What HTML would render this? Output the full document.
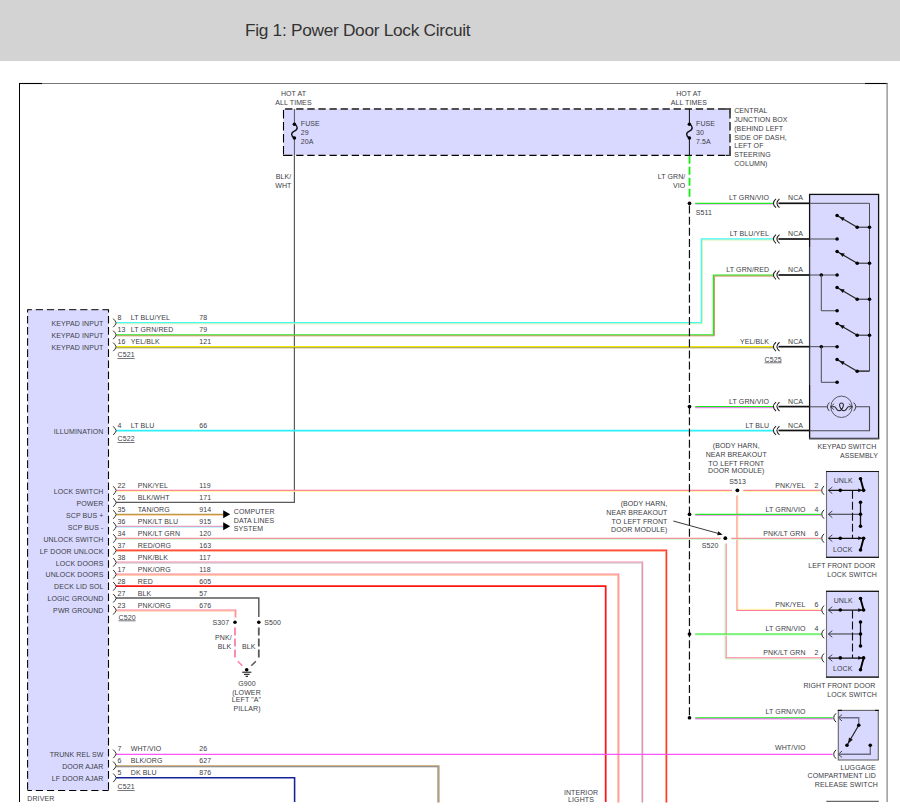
<!DOCTYPE html>
<html lang="en">
<head>
<meta charset="utf-8">
<title>Fig 1: Power Door Lock Circuit</title>
<style>
html,body{margin:0;padding:0;background:#fff}
body{width:900px;height:809px;overflow:hidden;position:relative;font-family:"Liberation Sans",Arial,sans-serif}
.hdr{position:absolute;left:0;top:0;width:900px;height:61px;background:#d3d3d3}
.hdr h1{position:absolute;left:245px;top:0;margin:0;font-weight:400;font-size:17.3px;line-height:61px;color:#333;white-space:nowrap;letter-spacing:-0.3px}
svg{position:absolute;left:0;top:0;display:block}
svg text{font-family:"Liberation Sans",Arial,sans-serif;font-size:7px;letter-spacing:0.1px;fill:#3d3d45}
</style>
</head>
<body>
<div class="hdr"><h1>Fig 1: Power Door Lock Circuit</h1></div>
<svg width="900" height="809" viewBox="0 0 900 809">
<line x1="19.5" y1="83" x2="19.5" y2="802" stroke="#000" stroke-width="1" />
<line x1="19" y1="83.5" x2="888" y2="83.5" stroke="#777" stroke-width="1" />
<line x1="19" y1="83.5" x2="42" y2="83.5" stroke="#000" stroke-width="1.1" />
<line x1="865" y1="83.5" x2="887.6" y2="83.5" stroke="#000" stroke-width="1.1" />
<line x1="887.1" y1="83" x2="887.1" y2="802" stroke="#8a8a8a" stroke-width="1.3" />
<rect x="283.3" y="108.9" width="446.7" height="46.3" fill="#d9d9ff"/>
<line x1="283.3" y1="109" x2="730" y2="109" stroke="#505050" stroke-width="1.8" stroke-dasharray="7.3 3.8" stroke-dashoffset="9.3"/>
<line x1="283.3" y1="155.4" x2="730" y2="155.4" stroke="#000" stroke-width="1.1" stroke-dasharray="7.3 3.8" stroke-dashoffset="9.3"/>
<line x1="283" y1="155.4" x2="285.4" y2="155.4" stroke="#000" stroke-width="1.1" />
<line x1="723.5" y1="109" x2="730.9" y2="109" stroke="#505050" stroke-width="1.8" />
<line x1="730" y1="108.2" x2="730" y2="113.5" stroke="#4a4a4a" stroke-width="1.8" />
<line x1="726" y1="155.4" x2="730.9" y2="155.4" stroke="#222" stroke-width="1.2" />
<line x1="730" y1="151" x2="730" y2="156" stroke="#4a4a4a" stroke-width="1.8" />
<line x1="283.5" y1="108.9" x2="283.5" y2="155.9" stroke="#000" stroke-width="1.1" stroke-dasharray="8.6 3.4" stroke-dashoffset="10.9"/>
<line x1="730" y1="108.9" x2="730" y2="155.9" stroke="#4a4a4a" stroke-width="1.8" stroke-dasharray="8.6 3.4" stroke-dashoffset="10.9"/>
<line x1="294.4" y1="108.9" x2="294.4" y2="124" stroke="#555" stroke-width="1" />
<line x1="294.4" y1="138" x2="294.4" y2="155.2" stroke="#555" stroke-width="1" />
<path d="M294.4,124 C298.09999999999997,126 298.09999999999997,129.6 294.4,131.1 C290.7,132.6 290.7,136 294.4,138" fill="none" stroke="#111" stroke-width="1.4"/>
<circle cx="294.4" cy="124.2" r="1.8" fill="#000"/>
<circle cx="294.4" cy="138" r="1.8" fill="#000"/>
<line x1="689.4" y1="108.9" x2="689.4" y2="124" stroke="#111" stroke-width="1" />
<line x1="689.4" y1="138" x2="689.4" y2="155.2" stroke="#111" stroke-width="1" />
<path d="M689.4,124 C693.1,126 693.1,129.6 689.4,131.1 C685.6999999999999,132.6 685.6999999999999,136 689.4,138" fill="none" stroke="#111" stroke-width="1.4"/>
<circle cx="689.4" cy="124.2" r="1.8" fill="#000"/>
<circle cx="689.4" cy="138" r="1.8" fill="#000"/>
<text x="293.5" y="95.9" text-anchor="middle">HOT AT</text>
<text x="293.5" y="104.8" text-anchor="middle">ALL TIMES</text>
<text x="688.8" y="95.9" text-anchor="middle">HOT AT</text>
<text x="688.8" y="104.8" text-anchor="middle">ALL TIMES</text>
<text x="300.8" y="125.5">FUSE</text>
<text x="300.8" y="134.5">29</text>
<text x="300.8" y="143.5">20A</text>
<text x="696" y="125.5">FUSE</text>
<text x="696" y="134.5">30</text>
<text x="696" y="143.5">7.5A</text>
<text x="734.2" y="112.7">CENTRAL</text>
<text x="734.2" y="121.8">JUNCTION BOX</text>
<text x="734.2" y="130.9">(BEHIND LEFT</text>
<text x="734.2" y="139.9">SIDE OF DASH,</text>
<text x="734.2" y="147.8">LEFT OF</text>
<text x="734.2" y="156.8">STEERING</text>
<text x="734.2" y="165.6">COLUMN)</text>
<text x="291.3" y="178.7" text-anchor="end">BLK/</text>
<text x="291.5" y="187.8" text-anchor="end">WHT</text>
<text x="685.4" y="178.5" text-anchor="end">LT GRN/</text>
<text x="685.4" y="187.6" text-anchor="end">VIO</text>
<rect x="27.6" y="309.6" width="81" height="480.8" fill="#d9d9ff"/>
<line x1="27.5" y1="309.6" x2="108.6" y2="309.6" stroke="#333" stroke-width="1.1" stroke-dasharray="7.2 3.9" stroke-dashoffset="2.8"/>
<line x1="27.5" y1="790.4" x2="108.6" y2="790.4" stroke="#000" stroke-width="1.05" stroke-dasharray="7.2 3.9" stroke-dashoffset="2.8"/>
<line x1="27.6" y1="309.5" x2="27.6" y2="790.4" stroke="#000" stroke-width="1.05" stroke-dasharray="7.6 3.5" stroke-dashoffset="4.6"/>
<line x1="108.5" y1="309.5" x2="108.5" y2="790.4" stroke="#000" stroke-width="1.1" stroke-dasharray="7.6 3.5" stroke-dashoffset="4.6"/>
<text x="27.3" y="800.8">DRIVER</text>
<polyline points="294.4,155.2 294.4,502.3 116,502.3" fill="none" stroke="#5a5a5a" stroke-width="1.2" />
<polyline points="116.2,322.8 701.4,322.8 701.4,239.05 773.4,239.05" fill="none" stroke="#48f6f6" stroke-width="1.45" />
<polyline points="116.2,323.85 702.45,323.85 702.45,240.1 773.4,240.1" fill="none" stroke="#d8f4a8" stroke-width="0.9" />
<polyline points="116.2,334.77 713.4,334.77 713.4,275.05 773.4,275.05" fill="none" stroke="#22e822" stroke-width="1.25" />
<polyline points="116.2,335.82 714.45,335.82 714.45,276.1 773.4,276.1" fill="none" stroke="#c88a50" stroke-width="0.9" />
<polyline points="116.2,346.74 773.4,346.74" fill="none" stroke="#f5e800" stroke-width="1.25" />
<polyline points="116.2,347.79 773.4,347.79" fill="none" stroke="#8a8420" stroke-width="0.9" />
<polyline points="116.0,430.58 773.2,430.58" fill="none" stroke="#2ef0f8" stroke-width="1.7" />
<polyline points="116.2,490.38 732.2,490.38" fill="none" stroke="#ff7f9a" stroke-width="1.25" />
<polyline points="116.2,491.43 732.2,491.43" fill="none" stroke="#fff79a" stroke-width="0.9" />
<polyline points="743.2,490.38 821.0,490.38" fill="none" stroke="#ff7f9a" stroke-width="1.25" />
<polyline points="743.2,491.43 821.0,491.43" fill="none" stroke="#fff79a" stroke-width="0.9" />
<polyline points="821.0,610.33 737.05,610.33 737.05,495.6" fill="none" stroke="#ff7f9a" stroke-width="1.25" />
<polyline points="821.0,609.28 738.1,609.28 738.1,495.6" fill="none" stroke="#fff79a" stroke-width="0.9" />
<polyline points="116.2,514.32 223.7,514.32" fill="none" stroke="#b4923f" stroke-width="1.25" />
<polyline points="116.2,515.37 223.7,515.37" fill="none" stroke="#ffc890" stroke-width="0.9" />
<polyline points="116.2,526.29 223.7,526.29" fill="none" stroke="#ec92b4" stroke-width="1.25" />
<polyline points="116.2,527.34 223.7,527.34" fill="none" stroke="#a8f4ff" stroke-width="0.9" />
<polygon points="223.2,510.27 230.2,514.27 223.2,518.27" fill="#000"/>
<polygon points="223.2,522.24 230.2,526.24 223.2,530.24" fill="#000"/>
<text x="233.75" y="514">COMPUTER</text>
<text x="233.75" y="523">DATA LINES</text>
<text x="233.75" y="531">SYSTEM</text>
<polyline points="116.2,538.26 720.7,538.26" fill="none" stroke="#ff7f9a" stroke-width="1.25" />
<polyline points="116.2,539.31 720.7,539.31" fill="none" stroke="#bdf8bd" stroke-width="0.9" />
<polyline points="731.2,538.26 821.0,538.26" fill="none" stroke="#ff7f9a" stroke-width="1.25" />
<polyline points="731.2,539.31 821.0,539.31" fill="none" stroke="#bdf8bd" stroke-width="0.9" />
<polyline points="726.05,543.6 726.05,657.96 821.0,657.96" fill="none" stroke="#ff7f9a" stroke-width="1.25" />
<polyline points="725.0,543.6 725.0,659.01 821.0,659.01" fill="none" stroke="#bdf8bd" stroke-width="0.9" />
<polyline points="116.2,550.23 666.55,550.23 666.55,802.6" fill="none" stroke="#ff3830" stroke-width="1.4" />
<polyline points="116.2,551.28 665.5,551.28 665.5,802.6" fill="none" stroke="#ffa078" stroke-width="0.9" />
<polyline points="116.2,562.2 642.55,562.2 642.55,802.6" fill="none" stroke="#ee90b0" stroke-width="1.25" />
<polyline points="116.2,563.25 641.5,563.25 641.5,802.6" fill="none" stroke="#d0d0d4" stroke-width="0.9" />
<polyline points="116.2,574.17 618.75,574.17 618.75,802.6" fill="none" stroke="#ff8a98" stroke-width="1.25" />
<polyline points="116.2,575.22 617.7,575.22 617.7,802.6" fill="none" stroke="#ffb488" stroke-width="0.9" />
<polyline points="116.0,586.19 605.7,586.19 605.7,802.0" fill="none" stroke="#ff1414" stroke-width="1.75" />
<polyline points="116,598.06 258.8,598.06 258.8,617" fill="none" stroke="#5a5a5a" stroke-width="1.5" />
<polyline points="116.2,610.08 235.75,610.08 235.75,617.6" fill="none" stroke="#ff7f9a" stroke-width="1.25" />
<polyline points="116.2,611.13 234.7,611.13 234.7,617.6" fill="none" stroke="#ffc898" stroke-width="0.9" />
<line x1="258.8" y1="627.5" x2="258.8" y2="659" stroke="#5a5a5a" stroke-width="1.8" stroke-dasharray="8 3"/>
<line x1="235" y1="627.5" x2="235" y2="659" stroke="#ff80a8" stroke-width="1.8" stroke-dasharray="8 3"/>
<line x1="255.8" y1="661.3" x2="251.3" y2="665.8" stroke="#5a5a5a" stroke-width="1.5" />
<line x1="237.8" y1="661.3" x2="242.3" y2="665.8" stroke="#ff80a8" stroke-width="1.5" />
<circle cx="258.8" cy="622.2" r="1.8" fill="#000"/>
<circle cx="235" cy="622.2" r="1.8" fill="#000"/>
<circle cx="246.7" cy="669.7" r="1.8" fill="#000"/>
<line x1="242.2" y1="672.2" x2="251.4" y2="672.2" stroke="#000" stroke-width="1" />
<line x1="244" y1="674.3" x2="249.6" y2="674.3" stroke="#000" stroke-width="1" />
<line x1="245.6" y1="676.3" x2="248" y2="676.3" stroke="#000" stroke-width="1" />
<text x="229.3" y="624.8" text-anchor="end">S307</text>
<text x="264.3" y="624.8">S500</text>
<text x="231.8" y="639.8" text-anchor="end">PNK/</text>
<text x="231.3" y="649" text-anchor="end">BLK</text>
<text x="242" y="649">BLK</text>
<text x="246.9" y="685.7" text-anchor="middle">G900</text>
<text x="246.5" y="694.5" text-anchor="middle">(LOWER</text>
<text x="246.5" y="702" text-anchor="middle">LEFT "A"</text>
<text x="247" y="710.7" text-anchor="middle">PILLAR)</text>
<polyline points="116.0,754.37 832.6,754.37" fill="none" stroke="#fb55fb" stroke-width="1.4" />
<polyline points="116.2,765.69 439.05,765.69 439.05,802.6" fill="none" stroke="#c49c60" stroke-width="1.1" />
<polyline points="116.2,766.74 438.0,766.74 438.0,802.6" fill="none" stroke="#7a7a7a" stroke-width="1.1" />
<polyline points="116.0,777.71 294.6,777.71 294.6,802.0" fill="none" stroke="#14229a" stroke-width="1.55" />
<text x="581" y="794.7" text-anchor="middle">INTERIOR</text>
<text x="581" y="801.7" text-anchor="middle">LIGHTS</text>
<text x="103.5" y="325.95" text-anchor="end">KEYPAD INPUT</text>
<text x="117.5" y="320.25">8</text>
<text x="130.75" y="320.25">LT BLU/YEL</text>
<text x="199.3" y="320.25">78</text>
<path d="M113.2,318.65 Q115.4,320.75 116.2,322.95 Q115.4,325.15 113.2,327.25" fill="none" stroke="#333" stroke-width="1"/>
<text x="103.5" y="337.92" text-anchor="end">KEYPAD INPUT</text>
<text x="117.5" y="332.22">13</text>
<text x="130.75" y="332.22">LT GRN/RED</text>
<text x="199.3" y="332.22">79</text>
<path d="M113.2,330.62 Q115.4,332.72 116.2,334.92 Q115.4,337.12 113.2,339.22" fill="none" stroke="#333" stroke-width="1"/>
<text x="103.5" y="349.89" text-anchor="end">KEYPAD INPUT</text>
<text x="117.5" y="344.19">16</text>
<text x="130.75" y="344.19">YEL/BLK</text>
<text x="199.3" y="344.19">121</text>
<path d="M113.2,342.59 Q115.4,344.69 116.2,346.89 Q115.4,349.09 113.2,351.19" fill="none" stroke="#333" stroke-width="1"/>
<text x="103.5" y="433.68" text-anchor="end">ILLUMINATION</text>
<text x="117.5" y="427.98">4</text>
<text x="130.75" y="427.98">LT BLU</text>
<text x="199.3" y="427.98">66</text>
<path d="M113.2,426.38 Q115.4,428.48 116.2,430.68 Q115.4,432.88 113.2,434.98" fill="none" stroke="#333" stroke-width="1"/>
<text x="103.5" y="493.53" text-anchor="end">LOCK SWITCH</text>
<text x="117.5" y="487.83">22</text>
<text x="137.75" y="487.83">PNK/YEL</text>
<text x="199.3" y="487.83">119</text>
<path d="M113.2,486.23 Q115.4,488.33 116.2,490.53 Q115.4,492.73 113.2,494.83" fill="none" stroke="#333" stroke-width="1"/>
<text x="103.5" y="505.5" text-anchor="end">POWER</text>
<text x="117.5" y="499.8">26</text>
<text x="137.75" y="499.8">BLK/WHT</text>
<text x="199.3" y="499.8">171</text>
<path d="M113.2,498.2 Q115.4,500.3 116.2,502.5 Q115.4,504.7 113.2,506.8" fill="none" stroke="#333" stroke-width="1"/>
<text x="103.5" y="518.22" text-anchor="end">SCP BUS +</text>
<text x="117.5" y="511.77">35</text>
<text x="137.75" y="511.77">TAN/ORG</text>
<text x="199.3" y="511.77">914</text>
<path d="M113.2,510.17 Q115.4,512.27 116.2,514.47 Q115.4,516.67 113.2,518.77" fill="none" stroke="#333" stroke-width="1"/>
<text x="103.5" y="529.64" text-anchor="end">SCP BUS -</text>
<text x="117.5" y="523.74">36</text>
<text x="137.75" y="523.74">PNK/LT BLU</text>
<text x="199.3" y="523.74">915</text>
<path d="M113.2,522.14 Q115.4,524.24 116.2,526.44 Q115.4,528.64 113.2,530.74" fill="none" stroke="#333" stroke-width="1"/>
<text x="103.5" y="542.41" text-anchor="end">UNLOCK SWITCH</text>
<text x="117.5" y="535.71">34</text>
<text x="137.75" y="535.71">PNK/LT GRN</text>
<text x="199.3" y="535.71">120</text>
<path d="M113.2,534.11 Q115.4,536.21 116.2,538.41 Q115.4,540.61 113.2,542.71" fill="none" stroke="#333" stroke-width="1"/>
<text x="103.5" y="554.13" text-anchor="end">LF DOOR UNLOCK</text>
<text x="117.5" y="547.68">37</text>
<text x="137.75" y="547.68">RED/ORG</text>
<text x="199.3" y="547.68">163</text>
<path d="M113.2,546.08 Q115.4,548.18 116.2,550.38 Q115.4,552.58 113.2,554.68" fill="none" stroke="#333" stroke-width="1"/>
<text x="103.5" y="566.35" text-anchor="end">LOCK DOORS</text>
<text x="117.5" y="559.65">38</text>
<text x="137.75" y="559.65">PNK/BLK</text>
<text x="199.3" y="559.65">117</text>
<path d="M113.2,558.05 Q115.4,560.15 116.2,562.35 Q115.4,564.55 113.2,566.65" fill="none" stroke="#333" stroke-width="1"/>
<text x="103.5" y="577.32" text-anchor="end">UNLOCK DOORS</text>
<text x="117.5" y="571.62">17</text>
<text x="137.75" y="571.62">PNK/ORG</text>
<text x="199.3" y="571.62">118</text>
<path d="M113.2,570.02 Q115.4,572.12 116.2,574.32 Q115.4,576.52 113.2,578.62" fill="none" stroke="#333" stroke-width="1"/>
<text x="103.5" y="589.29" text-anchor="end">DECK LID SOL</text>
<text x="117.5" y="583.59">28</text>
<text x="137.75" y="583.59">RED</text>
<text x="199.3" y="583.59">605</text>
<path d="M113.2,581.99 Q115.4,584.09 116.2,586.29 Q115.4,588.49 113.2,590.59" fill="none" stroke="#333" stroke-width="1"/>
<text x="103.5" y="601.26" text-anchor="end">LOGIC GROUND</text>
<text x="117.5" y="595.56">27</text>
<text x="137.75" y="595.56">BLK</text>
<text x="199.3" y="595.56">57</text>
<path d="M113.2,593.96 Q115.4,596.06 116.2,598.26 Q115.4,600.46 113.2,602.56" fill="none" stroke="#333" stroke-width="1"/>
<text x="103.5" y="613.23" text-anchor="end">PWR GROUND</text>
<text x="117.5" y="607.53">23</text>
<text x="137.75" y="607.53">PNK/ORG</text>
<text x="199.3" y="607.53">676</text>
<path d="M113.2,605.93 Q115.4,608.03 116.2,610.23 Q115.4,612.43 113.2,614.53" fill="none" stroke="#333" stroke-width="1"/>
<text x="103.5" y="756.87" text-anchor="end">TRUNK REL SW</text>
<text x="117.5" y="751.17">7</text>
<text x="130.75" y="751.17">WHT/VIO</text>
<text x="199.3" y="751.17">26</text>
<path d="M113.2,749.57 Q115.4,751.67 116.2,753.87 Q115.4,756.07 113.2,758.17" fill="none" stroke="#333" stroke-width="1"/>
<text x="103.5" y="768.84" text-anchor="end">DOOR AJAR</text>
<text x="117.5" y="763.14">6</text>
<text x="130.75" y="763.14">BLK/ORG</text>
<text x="199.3" y="763.14">627</text>
<path d="M113.2,761.54 Q115.4,763.64 116.2,765.84 Q115.4,768.04 113.2,770.14" fill="none" stroke="#333" stroke-width="1"/>
<text x="103.5" y="780.81" text-anchor="end">LF DOOR AJAR</text>
<text x="117.5" y="775.11">5</text>
<text x="130.75" y="775.11">DK BLU</text>
<text x="199.3" y="775.11">876</text>
<path d="M113.2,773.51 Q115.4,775.61 116.2,777.81 Q115.4,780.01 113.2,782.11" fill="none" stroke="#333" stroke-width="1"/>
<text x="117.5" y="357" text-decoration="underline">C521</text>
<text x="117.5" y="441" text-decoration="underline">C522</text>
<text x="118.5" y="619.5" text-decoration="underline">C520</text>
<text x="117.5" y="789" text-decoration="underline">C521</text>
<line x1="689.5" y1="155.8" x2="689.5" y2="197.6" stroke="#14ec14" stroke-width="1.8" stroke-dasharray="8 3"/>
<line x1="689.45" y1="205.5" x2="689.45" y2="717" stroke="#111" stroke-width="1.2" stroke-dasharray="8 3.15"/>
<circle cx="689.5" cy="203.3" r="1.85" fill="#000"/>
<polyline points="695.2,203.35 773.4,203.35" fill="none" stroke="#16ea16" stroke-width="1.25" />
<polyline points="695.2,204.4 773.4,204.4" fill="none" stroke="#e8b8f0" stroke-width="0.9" />
<circle cx="689.5" cy="406.6" r="1.85" fill="#000"/>
<polyline points="695.2,406.65 773.4,406.65" fill="none" stroke="#16ea16" stroke-width="1.25" />
<polyline points="695.2,407.7 773.4,407.7" fill="none" stroke="#e860e8" stroke-width="0.9" />
<circle cx="689.5" cy="514.3" r="1.85" fill="#000"/>
<polyline points="695.2,514.35 821.0,514.35" fill="none" stroke="#16ea16" stroke-width="1.25" />
<polyline points="695.2,515.4 821.0,515.4" fill="none" stroke="#f08af0" stroke-width="0.9" />
<circle cx="689.5" cy="634" r="1.85" fill="#000"/>
<polyline points="695.2,634.05 821.0,634.05" fill="none" stroke="#16ea16" stroke-width="1.25" />
<polyline points="695.2,635.1 821.0,635.1" fill="none" stroke="#d0f8d0" stroke-width="0.9" />
<circle cx="689.5" cy="717.75" r="1.85" fill="#000"/>
<polyline points="695.2,717.8 832.8,717.8" fill="none" stroke="#16ea16" stroke-width="1.25" />
<polyline points="695.2,718.85 832.8,718.85" fill="none" stroke="#f040f0" stroke-width="0.9" />
<text x="695.7" y="214.6">S511</text>
<rect x="809.6" y="194.4" width="69" height="244.2" fill="#d9d9ff" stroke="#111" stroke-width="1.3"/>
<line x1="809.6" y1="247" x2="809.6" y2="385" stroke="#d9d9ff" stroke-width="1.3" />
<line x1="809.5" y1="247" x2="809.5" y2="385" stroke="#3c3c44" stroke-width="1" />
<path d="M776.00,198.90 Q770.80,203.3 776.00,207.70" fill="none" stroke="#222" stroke-width="1.1"/>
<path d="M779.50,198.90 Q774.30,203.3 779.50,207.70" fill="none" stroke="#222" stroke-width="1.1"/>
<line x1="778.5" y1="203.3" x2="809.6" y2="203.3" stroke="#111" stroke-width="1.7" />
<path d="M776.00,234.60 Q770.80,239 776.00,243.40" fill="none" stroke="#222" stroke-width="1.1"/>
<path d="M779.50,234.60 Q774.30,239 779.50,243.40" fill="none" stroke="#222" stroke-width="1.1"/>
<line x1="778.5" y1="239" x2="809.6" y2="239" stroke="#111" stroke-width="1.7" />
<path d="M776.00,270.60 Q770.80,275 776.00,279.40" fill="none" stroke="#222" stroke-width="1.1"/>
<path d="M779.50,270.60 Q774.30,275 779.50,279.40" fill="none" stroke="#222" stroke-width="1.1"/>
<line x1="778.5" y1="275" x2="809.6" y2="275" stroke="#111" stroke-width="1.7" />
<path d="M776.00,342.29 Q770.80,346.69 776.00,351.09" fill="none" stroke="#222" stroke-width="1.1"/>
<path d="M779.50,342.29 Q774.30,346.69 779.50,351.09" fill="none" stroke="#222" stroke-width="1.1"/>
<line x1="778.5" y1="346.69" x2="809.6" y2="346.69" stroke="#111" stroke-width="1.7" />
<path d="M776.00,402.20 Q770.80,406.6 776.00,411.00" fill="none" stroke="#222" stroke-width="1.1"/>
<path d="M779.50,402.20 Q774.30,406.6 779.50,411.00" fill="none" stroke="#222" stroke-width="1.1"/>
<line x1="778.5" y1="406.6" x2="809.6" y2="406.6" stroke="#111" stroke-width="1.7" />
<path d="M776.00,426.08 Q770.80,430.48 776.00,434.88" fill="none" stroke="#222" stroke-width="1.1"/>
<path d="M779.50,426.08 Q774.30,430.48 779.50,434.88" fill="none" stroke="#222" stroke-width="1.1"/>
<line x1="778.5" y1="430.48" x2="809.6" y2="430.48" stroke="#111" stroke-width="1.7" />
<text x="769.1" y="199.6" text-anchor="end">LT GRN/VIO</text>
<text x="788" y="199.6">NCA</text>
<text x="769.1" y="235.75" text-anchor="end">LT BLU/YEL</text>
<text x="788" y="235.75">NCA</text>
<text x="769.1" y="272" text-anchor="end">LT GRN/RED</text>
<text x="788" y="272">NCA</text>
<text x="769.1" y="343.6" text-anchor="end">YEL/BLK</text>
<text x="788" y="343.6">NCA</text>
<text x="769.1" y="403.9" text-anchor="end">LT GRN/VIO</text>
<text x="788" y="403.9">NCA</text>
<text x="769.1" y="428" text-anchor="end">LT BLU</text>
<text x="788" y="428">NCA</text>
<text x="764.5" y="361.5" text-decoration="underline">C525</text>
<polyline points="809.6,203.3 869.5,203.3 869.5,371 857.2,371" fill="none" stroke="#4a4a52" stroke-width="1" />
<line x1="837.1" y1="215.5" x2="857.2" y2="227.2" stroke="#222" stroke-width="1.2" />
<polygon points="839.20,216.72 842.69,221.07 844.70,217.61" fill="#111"/>
<line x1="857.2" y1="227.2" x2="869.5" y2="227.2" stroke="#222" stroke-width="1" />
<circle cx="837.1" cy="215.5" r="1.8" fill="#000"/>
<circle cx="857.2" cy="227.2" r="1.8" fill="#000"/>
<circle cx="869.5" cy="227.2" r="1.8" fill="#000"/>
<line x1="837.1" y1="251.5" x2="857.2" y2="263.2" stroke="#222" stroke-width="1.2" />
<polygon points="839.20,252.72 842.69,257.07 844.70,253.61" fill="#111"/>
<line x1="857.2" y1="263.2" x2="869.5" y2="263.2" stroke="#222" stroke-width="1" />
<circle cx="837.1" cy="251.5" r="1.8" fill="#000"/>
<circle cx="857.2" cy="263.2" r="1.8" fill="#000"/>
<circle cx="869.5" cy="263.2" r="1.8" fill="#000"/>
<line x1="837.1" y1="287.5" x2="857.2" y2="299.2" stroke="#222" stroke-width="1.2" />
<polygon points="839.20,288.72 842.69,293.07 844.70,289.61" fill="#111"/>
<line x1="857.2" y1="299.2" x2="869.5" y2="299.2" stroke="#222" stroke-width="1" />
<circle cx="837.1" cy="287.5" r="1.8" fill="#000"/>
<circle cx="857.2" cy="299.2" r="1.8" fill="#000"/>
<circle cx="869.5" cy="299.2" r="1.8" fill="#000"/>
<line x1="837.1" y1="323.5" x2="857.2" y2="335.2" stroke="#222" stroke-width="1.2" />
<polygon points="839.20,324.72 842.69,329.07 844.70,325.61" fill="#111"/>
<line x1="857.2" y1="335.2" x2="869.5" y2="335.2" stroke="#222" stroke-width="1" />
<circle cx="837.1" cy="323.5" r="1.8" fill="#000"/>
<circle cx="857.2" cy="335.2" r="1.8" fill="#000"/>
<circle cx="869.5" cy="335.2" r="1.8" fill="#000"/>
<line x1="837.1" y1="359.5" x2="857.2" y2="371.2" stroke="#222" stroke-width="1.2" />
<polygon points="839.20,360.72 842.69,365.07 844.70,361.61" fill="#111"/>
<line x1="857.2" y1="371.2" x2="869.5" y2="371.2" stroke="#222" stroke-width="1" />
<circle cx="837.1" cy="359.5" r="1.8" fill="#000"/>
<circle cx="857.2" cy="371.2" r="1.8" fill="#000"/>
<line x1="809.6" y1="239" x2="837.1" y2="239" stroke="#4a4a52" stroke-width="1" />
<circle cx="837.1" cy="239" r="1.8" fill="#000"/>
<line x1="809.6" y1="275" x2="837.1" y2="275" stroke="#4a4a52" stroke-width="1" />
<circle cx="821.3" cy="275" r="1.8" fill="#000"/>
<circle cx="837.1" cy="275" r="1.8" fill="#000"/>
<polyline points="821.3,275 821.3,310.75 837.1,310.75" fill="none" stroke="#4a4a52" stroke-width="1" />
<circle cx="837.1" cy="310.75" r="1.8" fill="#000"/>
<line x1="809.6" y1="346.69" x2="837.1" y2="346.69" stroke="#4a4a52" stroke-width="1" />
<circle cx="821.3" cy="346.69" r="1.8" fill="#000"/>
<circle cx="837.1" cy="346.69" r="1.8" fill="#000"/>
<polyline points="821.3,346.69 821.3,382.3 837.1,382.3" fill="none" stroke="#4a4a52" stroke-width="1" />
<circle cx="837.1" cy="382.3" r="1.8" fill="#000"/>
<line x1="809.6" y1="406.8" x2="827.3" y2="406.8" stroke="#4a4a52" stroke-width="1" />
<polyline points="856,406.8 869.5,406.8 869.5,430.78000000000003 809.6,430.78000000000003" fill="none" stroke="#4a4a52" stroke-width="1.1" />
<circle cx="841.5" cy="406.8" r="10.7" fill="none" stroke="#4a4a55" stroke-width="0.9"/>
<path d="M829.4,402.5 Q825.2,406.8 829.4,411.1 M853.7,402.5 Q857.9,406.8 853.7,411.1" fill="none" stroke="#333" stroke-width="0.95"/>
<path d="M834.2,403.7 L830.6,406.8 L834.2,409.90000000000003 M848.8,403.7 L852.4,406.8 L848.8,409.90000000000003" fill="none" stroke="#444" stroke-width="0.85"/>
<path d="M830.6,406.8 L834.6,406.8 C836.2,406.8 836,410.7 838.8,410.7 C842,410.7 843.7,406.0 843.4,404.5 C843,402.6 840,402.6 839.6,404.5 C839.3,406.0 841,410.7 844.2,410.7 C847,410.7 846.8,406.8 848.4,406.8 L852.4,406.8" fill="none" stroke="#222" stroke-width="1.05"/>
<line x1="809" y1="438.5" x2="879.3" y2="438.5" stroke="#4d4d58" stroke-width="1.5" />
<text x="876.3" y="449.3" text-anchor="end">KEYPAD SWITCH</text>
<text x="878" y="458" text-anchor="end">ASSEMBLY</text>
<text x="736.3" y="448.3" text-anchor="middle">(BODY HARN,</text>
<text x="667.5" y="506" text-anchor="end">(BODY HARN,</text>
<text x="736.3" y="457" text-anchor="middle">NEAR BREAKOUT</text>
<text x="667.5" y="515" text-anchor="end">NEAR BREAKOUT</text>
<text x="736.3" y="465.6" text-anchor="middle">TO LEFT FRONT</text>
<text x="667.5" y="523.8" text-anchor="end">TO LEFT FRONT</text>
<text x="736.3" y="472.9" text-anchor="middle">DOOR MODULE)</text>
<text x="667.5" y="531.8" text-anchor="end">DOOR MODULE)</text>
<text x="737.5" y="484" text-anchor="middle">S513</text>
<circle cx="737.4" cy="490.33" r="1.9" fill="#000"/>
<circle cx="725.3" cy="538.21" r="1.9" fill="#000"/>
<text x="701.8" y="548.2">S520</text>
<line x1="673.3" y1="521" x2="721" y2="534.2" stroke="#222" stroke-width="0.9" />
<polygon points="722.6,534.7 717.2,535.2 718.3,531.3" fill="#111"/>
<rect x="826.5" y="471.5" width="52" height="85.8" fill="#d9d9ff" stroke="#6e6e6e" stroke-width="1.1"/>
<line x1="826" y1="471.5" x2="879" y2="471.5" stroke="#1a1a1a" stroke-width="1.2" />
<line x1="826" y1="557.3" x2="879" y2="557.3" stroke="#1a1a1a" stroke-width="1.2" />
<text x="833.7" y="482.7">UNLK</text>
<text x="833" y="552.4">LOCK</text>
<path d="M824,485.93 Q819.4,490.33 824,494.73" fill="none" stroke="#222" stroke-width="1"/>
<path d="M832.3,487.03 L828.3,490.33 L832.3,493.63" fill="none" stroke="#333" stroke-width="0.9"/>
<text x="814.6" y="487.73">2</text>
<text x="805.6" y="487.73" text-anchor="end">PNK/YEL</text>
<path d="M824,509.87 Q819.4,514.27 824,518.67" fill="none" stroke="#222" stroke-width="1"/>
<path d="M832.3,510.97 L828.3,514.27 L832.3,517.57" fill="none" stroke="#333" stroke-width="0.9"/>
<text x="814.6" y="511.67">4</text>
<text x="805.6" y="511.67" text-anchor="end">LT GRN/VIO</text>
<path d="M824,533.81 Q819.4,538.21 824,542.61" fill="none" stroke="#222" stroke-width="1"/>
<path d="M832.3,534.91 L828.3,538.21 L832.3,541.51" fill="none" stroke="#333" stroke-width="0.9"/>
<text x="814.6" y="535.61">6</text>
<text x="805.6" y="535.61" text-anchor="end">PNK/LT GRN</text>
<line x1="828.6" y1="490.43" x2="863.8" y2="490.43" stroke="#111" stroke-width="1.25" />
<circle cx="840.3" cy="490.33" r="1.8" fill="#000"/>
<line x1="828.6" y1="514.27" x2="860.5" y2="514.27" stroke="#333" stroke-width="1.0" />
<line x1="828.6" y1="538.3100000000001" x2="863.8" y2="538.3100000000001" stroke="#111" stroke-width="1.25" />
<circle cx="840.3" cy="538.21" r="1.8" fill="#000"/>
<line x1="852.5" y1="490.83" x2="852.5" y2="538.21" stroke="#111" stroke-width="1.1" stroke-dasharray="8 3"/>
<line x1="860.5" y1="478.72999999999996" x2="863.6" y2="490.33" stroke="#000" stroke-width="1.9" />
<circle cx="860.5" cy="478.72999999999996" r="1.8" fill="#000"/>
<circle cx="863.6" cy="490.33" r="1.8" fill="#000"/>
<line x1="860.5" y1="502.27" x2="860.5" y2="526.27" stroke="#111" stroke-width="1.3" />
<circle cx="860.5" cy="502.27" r="1.8" fill="#000"/>
<circle cx="860.5" cy="514.27" r="1.8" fill="#000"/>
<circle cx="860.5" cy="526.27" r="1.8" fill="#000"/>
<line x1="863.6" y1="538.21" x2="860.5" y2="550.01" stroke="#000" stroke-width="1.9" />
<circle cx="860.5" cy="550.01" r="1.8" fill="#000"/>
<circle cx="863.6" cy="538.21" r="1.8" fill="#000"/>
<polygon points="862.6,490.33 858.2,488.43 858.2,492.22999999999996" fill="#111"/>
<polygon points="862.6,538.21 858.2,536.3100000000001 858.2,540.11" fill="#111"/>
<text x="875.5" y="567.9" text-anchor="end">LEFT FRONT DOOR</text>
<text x="877" y="576.7" text-anchor="end">LOCK SWITCH</text>
<rect x="826.5" y="591.3" width="52" height="85.8" fill="#d9d9ff" stroke="#6e6e6e" stroke-width="1.1"/>
<line x1="826" y1="591.3" x2="879" y2="591.3" stroke="#1a1a1a" stroke-width="1.2" />
<line x1="826" y1="677.1" x2="879" y2="677.1" stroke="#1a1a1a" stroke-width="1.2" />
<text x="833.7" y="602.5">UNLK</text>
<text x="833" y="671.4">LOCK</text>
<path d="M824,605.63 Q819.4,610.03 824,614.43" fill="none" stroke="#222" stroke-width="1"/>
<path d="M832.3,606.73 L828.3,610.03 L832.3,613.33" fill="none" stroke="#333" stroke-width="0.9"/>
<text x="814.6" y="607.43">6</text>
<text x="805.6" y="607.43" text-anchor="end">PNK/YEL</text>
<path d="M824,629.57 Q819.4,633.97 824,638.37" fill="none" stroke="#222" stroke-width="1"/>
<path d="M832.3,630.67 L828.3,633.97 L832.3,637.27" fill="none" stroke="#333" stroke-width="0.9"/>
<text x="814.6" y="631.37">4</text>
<text x="805.6" y="631.37" text-anchor="end">LT GRN/VIO</text>
<path d="M824,653.51 Q819.4,657.91 824,662.31" fill="none" stroke="#222" stroke-width="1"/>
<path d="M832.3,654.61 L828.3,657.91 L832.3,661.21" fill="none" stroke="#333" stroke-width="0.9"/>
<text x="814.6" y="655.31">2</text>
<text x="805.6" y="655.31" text-anchor="end">PNK/LT GRN</text>
<line x1="828.6" y1="610.13" x2="863.8" y2="610.13" stroke="#111" stroke-width="1.25" />
<circle cx="840.3" cy="610.03" r="1.8" fill="#000"/>
<line x1="828.6" y1="633.97" x2="860.5" y2="633.97" stroke="#333" stroke-width="1.0" />
<line x1="828.6" y1="658.01" x2="863.8" y2="658.01" stroke="#111" stroke-width="1.25" />
<circle cx="840.3" cy="657.91" r="1.8" fill="#000"/>
<line x1="852.5" y1="610.53" x2="852.5" y2="657.91" stroke="#111" stroke-width="1.1" stroke-dasharray="8 3"/>
<line x1="860.5" y1="598.43" x2="863.6" y2="610.03" stroke="#000" stroke-width="1.9" />
<circle cx="860.5" cy="598.43" r="1.8" fill="#000"/>
<circle cx="863.6" cy="610.03" r="1.8" fill="#000"/>
<line x1="860.5" y1="621.97" x2="860.5" y2="645.97" stroke="#111" stroke-width="1.3" />
<circle cx="860.5" cy="621.97" r="1.8" fill="#000"/>
<circle cx="860.5" cy="633.97" r="1.8" fill="#000"/>
<circle cx="860.5" cy="645.97" r="1.8" fill="#000"/>
<line x1="863.6" y1="657.91" x2="860.5" y2="669.7099999999999" stroke="#000" stroke-width="1.9" />
<circle cx="860.5" cy="669.7099999999999" r="1.8" fill="#000"/>
<circle cx="863.6" cy="657.91" r="1.8" fill="#000"/>
<polygon points="862.6,610.03 858.2,608.13 858.2,611.93" fill="#111"/>
<polygon points="862.6,657.91 858.2,656.01 858.2,659.81" fill="#111"/>
<text x="875.5" y="687.7" text-anchor="end">RIGHT FRONT DOOR</text>
<text x="877" y="696.5" text-anchor="end">LOCK SWITCH</text>
<rect x="838.3" y="710.4" width="40" height="49.6" fill="#d9d9ff" stroke="#666" stroke-width="1.1"/>
<line x1="837.8" y1="710.4" x2="842" y2="710.4" stroke="#111" stroke-width="1.2" />
<line x1="875" y1="710.4" x2="878.8" y2="710.4" stroke="#111" stroke-width="1.2" />
<path d="M836,713.35 Q831.4,717.75 836,722.15" fill="none" stroke="#222" stroke-width="1"/>
<path d="M842,714.55 L838.4,717.75 L842,720.95" fill="none" stroke="#333" stroke-width="0.9"/>
<path d="M836,749.87 Q831.4,754.27 836,758.67" fill="none" stroke="#222" stroke-width="1"/>
<path d="M842,751.07 L838.4,754.27 L842,757.47" fill="none" stroke="#333" stroke-width="0.9"/>
<polyline points="838.6,717.75 858.75,717.75 858.75,725.3" fill="none" stroke="#6c6c84" stroke-width="1.35" />
<polyline points="838.6,754.27 870.3,754.27 870.3,745.3" fill="none" stroke="#6c6c84" stroke-width="1.35" />
<line x1="858.75" y1="725.3" x2="847" y2="745.3" stroke="#222" stroke-width="1.2" />
<circle cx="858.75" cy="725.3" r="1.8" fill="#000"/>
<circle cx="847" cy="745.3" r="1.8" fill="#000"/>
<circle cx="870.3" cy="745.3" r="1.8" fill="#000"/>
<polygon points="848,743.6 849,737.6 852.8,739.8" fill="#111"/>
<text x="805.6" y="713.7" text-anchor="end">LT GRN/VIO</text>
<text x="805.6" y="749.8" text-anchor="end">WHT/VIO</text>
<text x="875.8" y="769.5" text-anchor="end">LUGGAGE</text>
<text x="876" y="778" text-anchor="end">COMPARTMENT LID</text>
<text x="878" y="787" text-anchor="end">RELEASE SWITCH</text>
<line x1="826.3" y1="801.3" x2="878.8" y2="801.3" stroke="#444" stroke-width="1" />
</svg>
</body>
</html>
